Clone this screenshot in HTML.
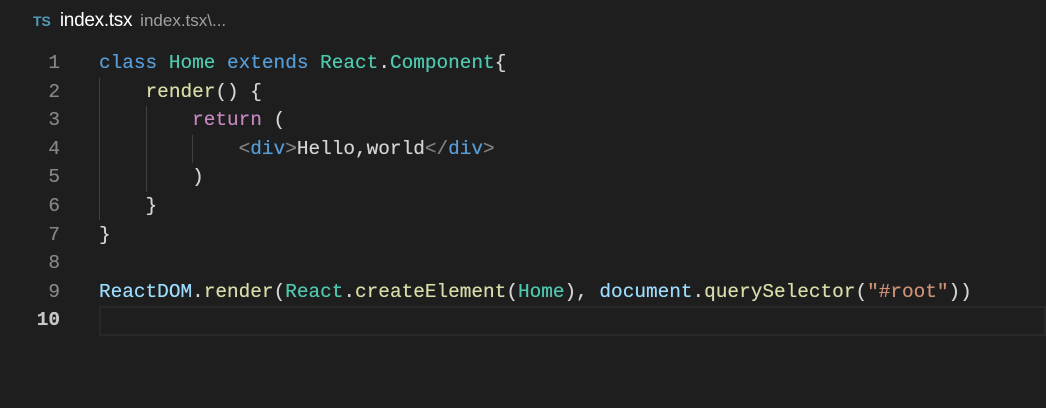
<!DOCTYPE html>
<html><head><style>
body{margin:0;width:1046px;height:408px;background:#1e1e1e;overflow:hidden;position:relative;font-family:"Liberation Sans",sans-serif}
.tab{position:absolute;left:33px;top:10px;font-size:19px;color:#fff;letter-spacing:-0.3px}
.tab .ts{color:#519aba;font-weight:bold;font-size:14px;margin-right:9px;letter-spacing:0}
.tab .p{color:#a0a0a0;font-size:17px;margin-left:8px;letter-spacing:0}
.code{position:absolute;top:49px;left:0;font-family:"Liberation Mono",monospace;font-size:19.4px;line-height:28.6px;white-space:pre;text-shadow:0 0 0.4px currentColor}
.ln{position:absolute;left:0;width:60px;text-align:right;color:#858585}
.ln.a{color:#c6c6c6;font-weight:bold}
.l{position:absolute;left:99px;color:#d4d4d4}
.k{color:#569cd6}.t{color:#4ec9b0}.f{color:#dcdcaa}.c{color:#c586c0}.v{color:#9cdcfe}.s{color:#ce9178}.g{color:#808080}
.cur{position:absolute;left:99px;right:0;top:306px;height:26px;border:2px solid #282828}
.guide{position:absolute;width:1px;background:#404040}
</style></head><body>
<div class="tab"><span class="ts">TS</span>index.tsx<span class="p">index.tsx\...</span></div>
<div class="cur"></div>
<div class="guide" style="left:99px;top:78px;height:142px"></div>
<div class="guide" style="left:146px;top:106px;height:86px"></div>
<div class="guide" style="left:192px;top:135px;height:28px"></div>
<div class="code">
<div class="ln" style="top:0">1</div><div class="l" style="top:0"><span class="k">class</span> <span class="t">Home</span> <span class="k">extends</span> <span class="t">React</span>.<span class="t">Component</span>{</div>
<div class="ln" style="top:28.6px">2</div><div class="l" style="top:28.6px">    <span class="f">render</span>() {</div>
<div class="ln" style="top:57.2px">3</div><div class="l" style="top:57.2px">        <span class="c">return</span> (</div>
<div class="ln" style="top:85.8px">4</div><div class="l" style="top:85.8px">            <span class="g">&lt;</span><span class="k">div</span><span class="g">&gt;</span>Hello,world<span class="g">&lt;/</span><span class="k">div</span><span class="g">&gt;</span></div>
<div class="ln" style="top:114.4px">5</div><div class="l" style="top:114.4px">        )</div>
<div class="ln" style="top:143px">6</div><div class="l" style="top:143px">    }</div>
<div class="ln" style="top:171.6px">7</div><div class="l" style="top:171.6px">}</div>
<div class="ln" style="top:200.2px">8</div>
<div class="ln" style="top:228.8px">9</div><div class="l" style="top:228.8px"><span class="v">ReactDOM</span>.<span class="f">render</span>(<span class="t">React</span>.<span class="f">createElement</span>(<span class="t">Home</span>), <span class="v">document</span>.<span class="f">querySelector</span>(<span class="s">"#root"</span>))</div>
<div class="ln a" style="top:257.4px">10</div>
</div>
</body></html>
